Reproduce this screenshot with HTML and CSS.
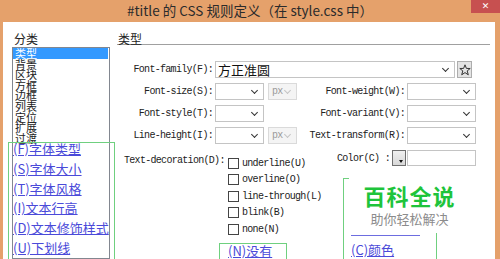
FILE: index.html
```html
<!DOCTYPE html>
<html lang="zh-CN">
<head>
    <meta charset="UTF-8">
    <meta name="viewport" content="width=device-width, initial-scale=1.0">
    <title>#title 的 CSS 规则定义</title>
    <link rel="stylesheet" href="styles.css">
</head>
<body>

    <div class="window">
        <div class="titlebar">
            <span class="title">#title 的 CSS 规则定义（在 style.css 中）</span>
            <span class="close">✕</span>
        </div>

        <div class="content">
            <div class="category">
                <div class="heading">分类</div>
                <ul class="listbox">
                    <li class="selected">类型</li>
                    <li>背景</li>
                    <li>区块</li>
                    <li>方框</li>
                    <li>边框</li>
                    <li>列表</li>
                    <li>定位</li>
                    <li>扩展</li>
                    <li>过渡</li>
                </ul>
            </div>

            <div class="panel">
                <div class="panel-title">类型</div>

                <div class="fields">
                    <div class="label">Font-family(F):</div>
                    <div class="family">
                        <div class="select wide"><span class="value">方正准圆</span></div>
                        <div class="star">
                            <svg width="12" height="12" viewBox="0 0 12 12">
                                <polygon points="6,0.8 7.4,4.4 11.2,4.5 8.2,6.9 9.3,10.8 6,8.6 2.7,10.8 3.8,6.9 0.8,4.5 4.6,4.4" fill="none" stroke="#333" stroke-width="1"/>
                            </svg>
                        </div>
                    </div>

                    <div class="label">Font-size(S):</div>
                    <div class="pair">
                        <div class="select small"></div>
                        <div class="select unit disabled"><span class="value">px</span></div>
                    </div>
                    <div class="label">Font-weight(W):</div>
                    <div class="select medium"></div>

                    <div class="label">Font-style(T):</div>
                    <div class="pair">
                        <div class="select small"></div>
                    </div>
                    <div class="label">Font-variant(V):</div>
                    <div class="select medium"></div>

                    <div class="label">Line-height(I):</div>
                    <div class="pair">
                        <div class="select small"></div>
                        <div class="select unit disabled"><span class="value">px</span></div>
                    </div>
                    <div class="label">Text-transform(R):</div>
                    <div class="select medium"></div>
                </div>

                <div class="decoration">
                    <div class="deco-label">Text-decoration(D):</div>
                    <div class="checks">
                        <label class="check"><span class="box"></span>underline(U)</label>
                        <label class="check"><span class="box"></span>overline(O)</label>
                        <label class="check"><span class="box"></span>line-through(L)</label>
                        <label class="check"><span class="box"></span>blink(B)</label>
                        <label class="check"><span class="box"></span>none(N)</label>
                    </div>
                    <div class="color-row">
                        <span class="color-label">Color(C) :</span>
                        <span class="swatch"></span>
                        <div class="select medium plain"></div>
                    </div>
                </div>
            </div>

            <!-- annotations drawn over the dialog -->
            <div class="note note-left">
                <a href="#">(F)字体类型</a>
                <a href="#">(S)字体大小</a>
                <a href="#">(T)字体风格</a>
                <a href="#">(I)文本行高</a>
                <a href="#">(D)文本修饰样式</a>
                <a href="#">(U)下划线</a>
            </div>
            <div class="note note-none">
                <a href="#">(N)没有</a>
            </div>
            <div class="note note-color">
                <div class="rule"></div>
                <a href="#">(C)颜色</a>
            </div>
            <div class="watermark">
                <div class="brand">百科全说</div>
                <div class="slogan">助你轻松解决</div>
            </div>
        </div>
    </div>

</body>
</html>
```

FILE: styles.css
```css
/* Basic Reset */
* {
    margin: 0;
    padding: 0;
    box-sizing: border-box;
}

body {
    height: 259px;
    overflow: hidden;
    background: #e5a16b;
    font-family: "Noto Sans CJK SC", sans-serif;
    color: #222;
}

.titlebar {
    position: relative;
    height: 22px;
    text-align: center;
    font-size: 13.5px;
    line-height: 20px;
    color: #2b2b2b;
}

.close {
    position: absolute;
    top: 0;
    right: 0;
    width: 29px;
    height: 13px;
    background: #c75050;
    color: #fff;
    font: bold 9px/13px "DejaVu Sans", sans-serif;
}

.content {
    position: relative;
    display: flex;
    gap: 7px;
    height: 237px;
    margin: 0 5px 0 3px;
    padding: 11px 5px 0 9px;
    background: #fff;
    overflow: hidden;
}

/* Category list */
.category {
    width: 98px;
    display: flex;
    flex-direction: column;
}

.heading {
    font-size: 12px;
    line-height: 12px;
    padding-left: 2px;
}

.listbox {
    flex: 1;
    margin-top: 2px;
    border: 1px solid #828790;
    list-style: none;
    font-size: 11px;
    line-height: 10.6px;
}

.listbox li {
    padding-left: 2px;
}

.listbox .selected {
    background: #3399ff;
    color: #fff;
    margin-right: 1px;
}

/* Type panel */
.panel {
    flex: 1;
    font-family: "Liberation Mono", monospace;
    font-size: 10px;
    letter-spacing: -0.7px;
    color: #222;
}

.panel-title {
    font-family: "Noto Sans CJK SC", sans-serif;
    font-size: 12px;
    line-height: 11px;
    letter-spacing: 0;
    padding-left: 1px;
    border-bottom: 1px solid #a0a0a0;
}

.fields {
    display: grid;
    grid-template-columns: 98px 84px 108px 69px;
    grid-auto-rows: 17px;
    row-gap: 5px;
    margin-top: 16px;
    align-items: center;
}

.label {
    text-align: right;
    padding-right: 2px;
    white-space: nowrap;
}

.family {
    grid-column: 2 / 5;
    display: flex;
    gap: 2px;
}

.pair {
    display: flex;
    gap: 4px;
}

.select {
    position: relative;
    height: 17px;
    border: 1px solid #c4c4c4;
    background: #fff;
}

.select::after {
    content: "";
    position: absolute;
    top: 4px;
    right: 6px;
    width: 4px;
    height: 4px;
    border-right: 1.5px solid #333;
    border-bottom: 1.5px solid #333;
    transform: rotate(45deg);
}

.select.plain::after {
    display: none;
}

.select.wide {
    width: 240px;
}

.select.small {
    width: 49px;
}

.select.unit {
    width: 29px;
}

.select.medium {
    width: 69px;
}

.select.disabled {
    background: #f4f4f4;
    border-color: #dadada;
    color: #9a9a9a;
}

.select.disabled::after {
    border-color: #c4c4c4;
}

.value {
    display: block;
    padding-left: 3px;
    line-height: 15px;
}

.wide .value {
    font-family: "Noto Sans CJK SC", sans-serif;
    font-size: 13px;
    letter-spacing: 0;
    padding-left: 2px;
    color: #111;
}

.star {
    width: 15px;
    height: 17px;
    display: flex;
    align-items: center;
    justify-content: center;
    background: #e4e4e4;
    border: 1px solid #adadad;
}

/* Text decoration + color */
.decoration {
    display: flex;
    margin-top: 6px;
}

.deco-label {
    width: 111px;
    padding: 5px 0 0 7px;
    line-height: 12px;
    white-space: nowrap;
}

.checks {
    width: 109px;
    padding-top: 7px;
    display: flex;
    flex-direction: column;
    gap: 4.6px;
}

.check {
    display: flex;
    align-items: center;
    height: 12px;
    white-space: nowrap;
}

.box {
    width: 11px;
    height: 11px;
    margin-right: 3px;
    border: 1px solid #444;
    background: #fff;
}

.color-row {
    display: flex;
    align-items: center;
    height: 16px;
}

.color-label {
    margin-right: 2px;
    white-space: nowrap;
}

.swatch {
    position: relative;
    width: 14px;
    height: 16px;
    margin-right: 1px;
    border: 1px solid #707070;
    background: linear-gradient(#f0f0f0, #d8d8d8);
}

.swatch::after {
    content: "";
    position: absolute;
    right: 2px;
    bottom: 2px;
    border-left: 2.5px solid transparent;
    border-right: 2.5px solid transparent;
    border-top: 3px solid #111;
}

.color-row .select {
    height: 16px;
}

/* Annotation boxes */
.note {
    position: absolute;
    border: 1px solid #6fd07f;
    font-size: 13px;
}

.note a {
    display: block;
    color: #4a4ad9;
    text-decoration: underline;
    white-space: nowrap;
}

.note-left {
    left: 5px;
    top: 120px;
    width: 107px;
    height: 140px;
    padding-left: 4px;
}

.note-left a {
    line-height: 19.8px;
}

.note-left a:first-child {
    margin-top: -4px;
}

.note-none {
    left: 216px;
    top: 221px;
    width: 68px;
    height: 40px;
    padding-left: 8px;
    line-height: 14px;
}

.note-color {
    left: 340px;
    top: 156px;
    width: 94px;
    height: 110px;
    padding-left: 7px;
}

.note-color .rule {
    width: 69px;
    margin-top: 56px;
    border-top: 1px solid #6d6de0;
}

.note-color a {
    margin-top: 6px;
    line-height: 16px;
}

.watermark {
    position: absolute;
    left: 346px;
    top: 155px;
    width: 121px;
    height: 56px;
    padding-top: 3px;
    background: #fff;
    text-align: center;
}

.brand {
    font-size: 22px;
    font-weight: bold;
    line-height: 30px;
    color: #1ec43b;
    letter-spacing: 1px;
}

.slogan {
    font-size: 13px;
    line-height: 18px;
    color: #8c8c8c;
}
```
